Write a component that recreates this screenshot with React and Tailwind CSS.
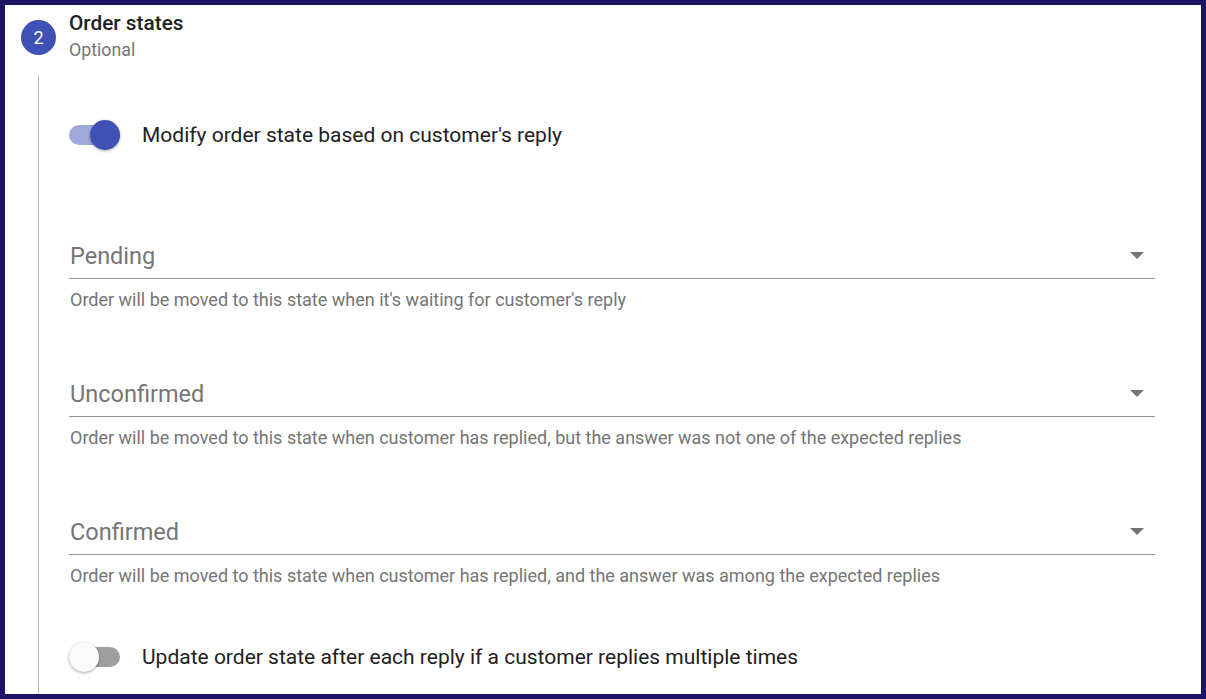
const fields = [
  { label: 'Pending', hint: "Order will be moved to this state when it's waiting for customer's reply" },
  { label: 'Unconfirmed', hint: 'Order will be moved to this state when customer has replied, but the answer was not one of the expected replies' },
  { label: 'Confirmed', hint: 'Order will be moved to this state when customer has replied, and the answer was among the expected replies' },
]

function Toggle({ on }) {
  return (
    <div className="relative w-[51px] h-[20px] shrink-0">
      <div className={`absolute inset-0 rounded-full ${on ? 'bg-[#9fa8da]' : 'bg-[#9e9e9e]'}`} />
      <div
        className={`absolute top-[-5px] w-[30px] h-[30px] rounded-full shadow-[0_1px_3px_rgba(0,0,0,0.35)] ${
          on ? 'left-[21px] bg-[#3f51b5]' : 'left-[0px] bg-[#fafafa]'
        }`}
      />
    </div>
  )
}

function SelectField({ label, hint, first }) {
  return (
    <div className={first ? 'mt-[77px]' : 'mt-[60px]'}>
      <div className="h-[47px] flex items-center justify-between border-b border-[#949494] pl-px pr-[11px]">
        <span className="mt-[3px] text-[23.5px] text-[#757575]">{label}</span>
        <span className="w-0 h-0 border-l-[7px] border-r-[7px] border-t-[7px] border-l-transparent border-r-transparent border-t-[#757575]" />
      </div>
      <div className="mt-[11px] h-[20px] leading-[20px] pl-px text-[18px] text-[#757575]">{hint}</div>
    </div>
  )
}

export default function App() {
  return (
    <div
      className="w-[1206px] h-[699px] border-[5px] border-[#1e1466] bg-white overflow-hidden"
      style={{ fontFamily: 'Roboto, "Liberation Sans", sans-serif' }}
    >
      <div className="h-[70px] flex items-start pl-[16px]">
        <div className="mt-[15px] w-[35px] h-[35px] rounded-full bg-[#3f51b5] text-white text-[18px] flex items-center justify-center">
          2
        </div>
        <div className="ml-[13px] mt-[6px]">
          <div className="text-[20.8px] leading-[24px] font-medium text-[#212121]">Order states</div>
          <div className="text-[17.8px] leading-[20px] mt-[5px] text-[#757575]">Optional</div>
        </div>
      </div>

      <div className="ml-[33px] border-l border-[#bdbdbd] pt-[40px] pl-[30px] pr-[46px] h-[624px]">
        <div className="h-[40px] flex items-center">
          <Toggle on />
          <span className="ml-[22px] mt-[2px] text-[21px] text-[#212121]">Modify order state based on customer's reply</span>
        </div>

        {fields.map((f, i) => (
          <SelectField key={f.label} label={f.label} hint={f.hint} first={i === 0} />
        ))}

        <div className="mt-[51px] h-[40px] flex items-center">
          <Toggle />
          <span className="ml-[22px] mt-[2px] text-[21px] text-[#212121]">Update order state after each reply if a customer replies multiple times</span>
        </div>
      </div>
    </div>
  )
}
